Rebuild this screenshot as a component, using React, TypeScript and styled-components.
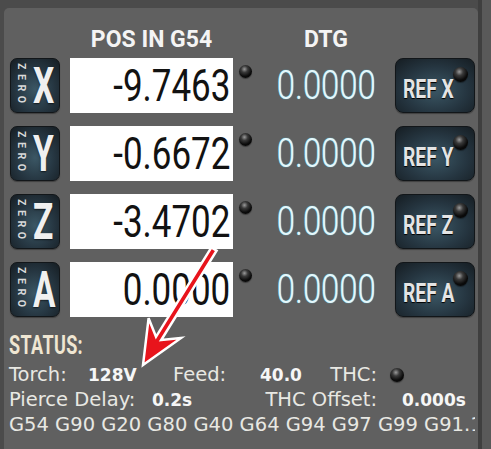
import React from 'react';
import styled, { createGlobalStyle, css } from 'styled-components';

const axes = [
  { name: 'X', pos: '-9.7463', dtg: '0.0000' },
  { name: 'Y', pos: '-0.6672', dtg: '0.0000' },
  { name: 'Z', pos: '-3.4702', dtg: '0.0000' },
  { name: 'A', pos: '0.0000', dtg: '0.0000' },
];

function App() {
  return (
    <Root>
      <GlobalStyle />
      <Panel>
        <HeaderRow>
          <span />
          <HeaderLabel>POS IN G54</HeaderLabel>
          <span />
          <HeaderLabel>DTG</HeaderLabel>
        </HeaderRow>

        <Rows>
          {axes.map((a) => (
            <AxisRow key={a.name}>
              <ZeroButton>
                <ZeroWord>ZERO</ZeroWord>
                <AxisLetter>{a.name}</AxisLetter>
              </ZeroButton>
              <ValueBox>
                <ValueText>{a.pos}</ValueText>
              </ValueBox>
              <LedCell>
                <Led $size={13} />
              </LedCell>
              <DtgCell>
                <DtgText>{a.dtg}</DtgText>
              </DtgCell>
              <RefButton>
                <RefText>REF {a.name}</RefText>
                <RefLed $size={15} />
              </RefButton>
            </AxisRow>
          ))}
        </Rows>

        <Status>
          <StatusTitleLine>
            <StatusTitle>STATUS:</StatusTitle>
          </StatusTitleLine>
          <StatusLine>
            <Cell $w={79}>Torch:</Cell>
            <Cell $w={85} $bold>128V</Cell>
            <Cell $w={87}>Feed:</Cell>
            <Cell $w={70} $bold>40.0</Cell>
            <Cell $w={47} $right>THC:</Cell>
            <ThcLed $size={14} />
          </StatusLine>
          <StatusLine>
            <Cell $w={143}>Pierce Delay:</Cell>
            <Cell $w={109} $bold>0.2s</Cell>
            <Cell $w={116} $right>THC Offset:</Cell>
            <Cell $w={25} />
            <Cell $w={80} $bold>0.000s</Cell>
          </StatusLine>
          <StatusLine>G54 G90 G20 G80 G40 G64 G94 G97 G99 G91.1</StatusLine>
        </Status>
      </Panel>
      <Edge />

      <Overlay width="491" height="449" viewBox="0 0 491 449">
        <polygon
          points="143,365 181,338 161.2,340 216.6,250.6 211.4,247.4 156,336.8 148.6,318.2"
          fill="#e8141c"
          stroke="#ffffff"
          strokeWidth="2.5"
          strokeLinejoin="miter"
        />
      </Overlay>
    </Root>
  );
}

const GlobalStyle = createGlobalStyle`
  html, body {
    margin: 0;
    padding: 0;
    background: #4b4b4b;
  }
  #root {
    width: 491px;
    height: 449px;
  }
`;

const Root = styled.div`
  position: relative;
  width: 491px;
  height: 449px;
  overflow: hidden;
  display: flex;
  align-items: stretch;
  background: #4b4b4b;
`;

const Panel = styled.div`
  flex: 0 0 474px;
  margin: 8px 0 0 4px;
  box-sizing: border-box;
  padding-top: 19px;
  background: #606060;
  border-radius: 5px 5px 0 0;
  overflow: hidden;
`;

const Edge = styled.div`
  flex: 0 0 13px;
  box-sizing: border-box;
  border-left: 4px solid #3f3f3f;
  background: #595959;
`;

const columns = css`
  display: grid;
  grid-template-columns: 60px 163px 24px 138px 80px;
  padding-left: 6px;
`;

const HeaderRow = styled.div`
  ${columns};
  height: 26px;
  margin-bottom: 5px;
`;

const HeaderLabel = styled.div`
  font-family: Roboto, 'Liberation Sans', sans-serif;
  font-weight: 700;
  font-size: 23px;
  line-height: 26px;
  color: #f4f4f4;
  text-align: center;
`;

const Rows = styled.div`
  display: flex;
  flex-direction: column;
  gap: 13px;
`;

const AxisRow = styled.div`
  ${columns};
  height: 55px;
`;

const darkButton = css`
  box-sizing: border-box;
  border: 1px solid #121619;
  border-radius: 8px;
  background: radial-gradient(
    ellipse 75% 80% at 50% 58%,
    #3b5765 0%,
    #253540 55%,
    #151c21 100%
  );
  box-shadow: 0 1px 1px rgba(0, 0, 0, 0.35);
`;

const ZeroButton = styled.div`
  ${darkButton};
  width: 50px;
  display: flex;
  align-items: center;
  padding-left: 6px;
  border-radius: 7px;
`;

const ZeroWord = styled.span`
  writing-mode: vertical-rl;
  font-family: Roboto, 'Liberation Sans', sans-serif;
  font-weight: 700;
  font-size: 10.5px;
  letter-spacing: 4.6px;
  line-height: 9px;
  color: #d9d9d9;
  margin-right: 7px;
`;

const AxisLetter = styled.span`
  display: inline-block;
  font-family: Roboto, 'Liberation Sans', sans-serif;
  font-weight: 700;
  font-size: 50px;
  line-height: 1;
  color: #f0f0f0;
  transform: scaleX(0.67);
  transform-origin: left center;
  margin-right: -12px;
  text-shadow: 0 1px 2px rgba(0, 0, 0, 0.6);
`;

const ValueBox = styled.div`
  background: #ffffff;
  display: flex;
  align-items: center;
  justify-content: flex-end;
  padding-right: 3px;
  overflow: hidden;
`;

const ValueText = styled.span`
  display: inline-block;
  font-family: Roboto, 'Liberation Sans', sans-serif;
  font-size: 44px;
  line-height: 1;
  color: #121212;
  transform: scaleX(0.795);
  transform-origin: right center;
`;

const Led = styled.div<{ $size: number }>`
  width: ${(p) => p.$size}px;
  height: ${(p) => p.$size}px;
  border-radius: 50%;
  background: radial-gradient(
    circle at 42% 32%,
    #9a9a9a 0%,
    #3a3a3a 28%,
    #0b0b0b 62%,
    #000 100%
  );
  box-shadow: 0 1px 1px rgba(0, 0, 0, 0.4);
`;

const LedCell = styled.div`
  display: flex;
  justify-content: center;
  align-items: flex-start;
  padding-top: 7px;
`;

const DtgCell = styled.div`
  display: flex;
  align-items: center;
  justify-content: center;
`;

const DtgText = styled.span`
  display: inline-block;
  font-family: Roboto, 'Liberation Sans', sans-serif;
  font-weight: 300;
  font-size: 40px;
  line-height: 1;
  color: #e6f7fa;
  transform: scaleX(0.82);
  text-shadow: 0 0 1px #5fb8d2, 0 0 1px #5fb8d2;
`;

const RefButton = styled.div`
  ${darkButton};
  position: relative;
  display: flex;
  align-items: center;
  padding: 7px 0 0 7px;
`;

const RefText = styled.span`
  display: inline-block;
  font-family: Roboto, 'Liberation Sans', sans-serif;
  font-weight: 700;
  font-size: 25px;
  line-height: 1;
  color: #e4e4e4;
  white-space: nowrap;
  transform: scaleX(0.77);
  transform-origin: left center;
  text-shadow: 0 1px 1px #000;
`;

const RefLed = styled(Led)`
  position: absolute;
  top: 8px;
  right: 6px;
`;

const Status = styled.div`
  margin-top: 17px;
  padding: 0 3px 0 5px;
  width: 471px;
  box-sizing: border-box;
  overflow: hidden;
`;

const StatusTitleLine = styled.div`
  height: 24px;
  margin-bottom: 4px;
`;

const StatusTitle = styled.span`
  display: inline-block;
  font-family: Roboto, 'Liberation Sans', sans-serif;
  font-weight: 700;
  font-size: 25px;
  line-height: 24px;
  letter-spacing: 0.5px;
  color: #efe6d2;
  transform: scaleX(0.72);
  transform-origin: left center;
`;

const StatusLine = styled.div`
  display: flex;
  align-items: baseline;
  height: 25px;
  font-family: 'DejaVu Sans', Verdana, sans-serif;
  font-size: 19.5px;
  line-height: 25px;
  color: #e8e8e3;
  white-space: nowrap;
`;

const Cell = styled.span<{ $w: number; $bold?: boolean; $right?: boolean }>`
  flex: 0 0 ${(p) => p.$w}px;
  text-align: ${(p) => (p.$right ? 'right' : 'left')};
  ${(p) =>
    p.$bold &&
    css`
      font-weight: 700;
      font-size: 17px;
      color: #f6f6f6;
    `}
`;

const ThcLed = styled(Led)`
  align-self: center;
  margin-left: 13px;
`;

const Overlay = styled.svg`
  position: absolute;
  left: 0;
  top: 0;
  pointer-events: none;
`;

export default App;
